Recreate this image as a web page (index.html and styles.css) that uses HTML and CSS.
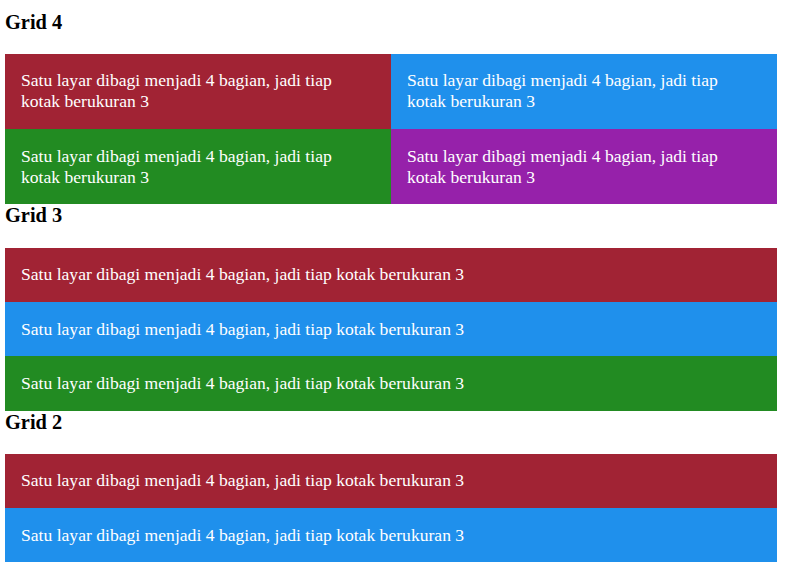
FILE: index.html
```html
<!DOCTYPE html>
<html>
<head>
<meta charset="utf-8">
<link rel="stylesheet" href="styles.css">
</head>
<body>
<h2 class="title first">Grid 4</h2>
<div class="grid cols-2">
  <div class="box red">Satu layar dibagi menjadi 4 bagian, jadi tiap kotak berukuran 3</div>
  <div class="box blue">Satu layar dibagi menjadi 4 bagian, jadi tiap kotak berukuran 3</div>
  <div class="box green">Satu layar dibagi menjadi 4 bagian, jadi tiap kotak berukuran 3</div>
  <div class="box purple">Satu layar dibagi menjadi 4 bagian, jadi tiap kotak berukuran 3</div>
</div>
<h2 class="title">Grid 3</h2>
<div class="grid">
  <div class="box red">Satu layar dibagi menjadi 4 bagian, jadi tiap kotak berukuran 3</div>
  <div class="box blue">Satu layar dibagi menjadi 4 bagian, jadi tiap kotak berukuran 3</div>
  <div class="box green">Satu layar dibagi menjadi 4 bagian, jadi tiap kotak berukuran 3</div>
</div>
<h2 class="title">Grid 2</h2>
<div class="grid">
  <div class="box red">Satu layar dibagi menjadi 4 bagian, jadi tiap kotak berukuran 3</div>
  <div class="box blue">Satu layar dibagi menjadi 4 bagian, jadi tiap kotak berukuran 3</div>
</div>
</body>
</html>
```
FILE: styles.css
```css
html, body {
  margin: 0;
  background: #fff;
}
body {
  padding: 10.5px 8px 0 5px;
  font-family: "Liberation Serif", "Times New Roman", serif;
  color: #000;
}
.title {
  font-size: 20.4px;
  font-weight: bold;
  line-height: 22.5px;
  margin: 0 0 20.8px 0;
}
.grid {
  display: grid;
  grid-template-columns: 1fr;
}
.grid.cols-2 {
  grid-template-columns: 1fr 1fr;
}
.box {
  color: #fff;
  font-size: 17.6px;
  line-height: 21px;
  padding: 16.65px 16px;
}
.red { background: #a12334; }
.blue { background: #1f90ec; }
.green { background: #228b22; }
.purple { background: #9621aa; }
```
